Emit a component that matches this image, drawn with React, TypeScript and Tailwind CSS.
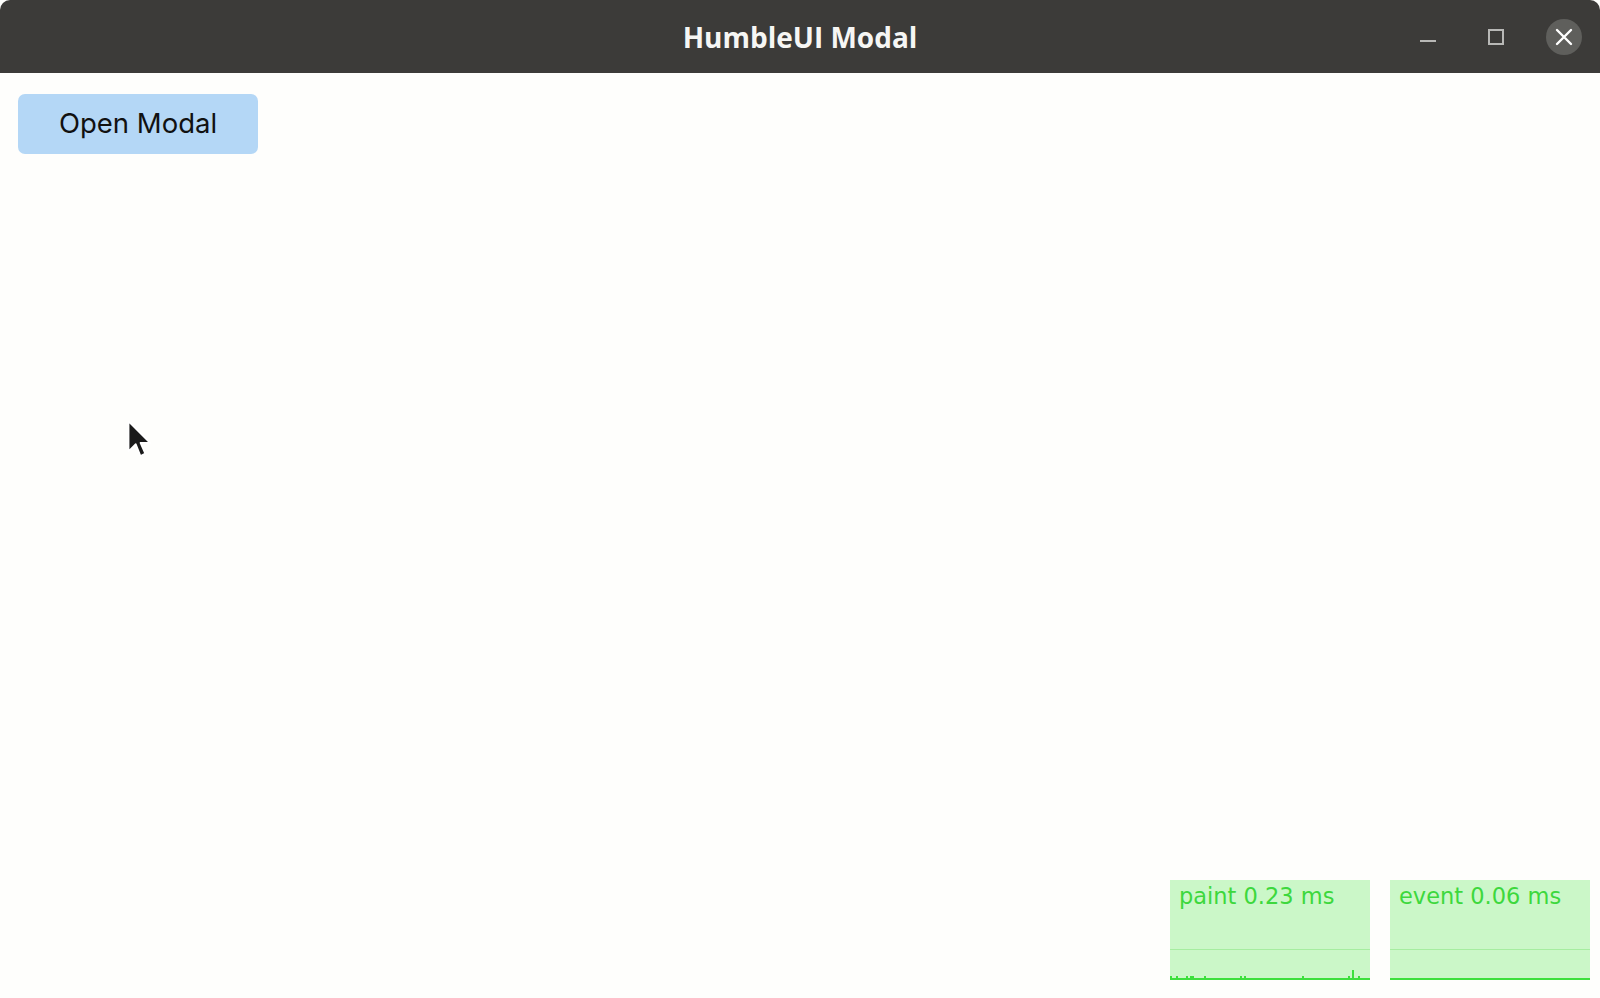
const spikes = [
  { x: 0, h: 2 },
  { x: 6, h: 2 },
  { x: 16, h: 2 },
  { x: 20, h: 2, w: 4 },
  { x: 34, h: 2 },
  { x: 70, h: 2 },
  { x: 74, h: 2 },
  { x: 132, h: 2 },
  { x: 178, h: 2 },
  { x: 182, h: 8 },
  { x: 188, h: 2 },
];

const StatPanel = ({ label, graph }: { label: string; graph?: boolean }) => (
  <div className="flex w-[200px] h-[100px] flex-col bg-[#cbf7c8]">
    <div
      className="h-[69px] pl-[9px] pt-[3px] text-[22.5px] leading-[26px] text-[#3dd83d]"
      style={{ fontFamily: '"DejaVu Sans", sans-serif' }}
    >
      {label}
    </div>
    <div className="h-px bg-[#a6eda0]" />
    <svg width="200" height="30" viewBox="0 0 200 30" className="block">
      {graph &&
        spikes.map((s, i) => (
          <rect key={i} x={s.x} y={28 - s.h} width={s.w ?? 2} height={s.h} fill="#3ddf3d" />
        ))}
      <rect x="0" y="28" width="200" height="2" fill="#3ddf3d" />
    </svg>
  </div>
);

const Cursor = () => (
  <svg width="31" height="43" viewBox="0 0 26 36" className="absolute left-[125px] top-[419px]">
    <path
      d="M3 2 L3 27 L9 21 L13 31 L17 29 L13 20 L21 20 Z"
      fill="#1a1a1a"
      stroke="#ffffff"
      strokeWidth="1.4"
      strokeLinejoin="round"
    />
  </svg>
);

export default function App() {
  return (
    <div className="relative flex h-[998px] w-[1600px] flex-col overflow-hidden bg-[#fefefc]">
      {/* title bar */}
      <div className="grid h-[73px] shrink-0 grid-cols-[1fr_auto_1fr] items-center rounded-t-[10px] bg-[#3c3b39]">
        <div />
        <div
          className="text-[28px] font-bold text-[#f6f6f4]"
          style={{ fontFamily: '"Open Sans", sans-serif' }}
        >
          HumbleUI Modal
        </div>
        <div className="flex items-center justify-end pr-[18px]">
          <div className="mt-[9px] h-[2px] w-[16px] bg-[#b8b8b6]" />
          <div className="ml-[52px] h-[16px] w-[16px] border-2 border-[#b8b8b6]" />
          <div className="ml-[42px] flex h-[36px] w-[36px] items-center justify-center rounded-full bg-[#5f5f5c]">
            <svg width="18" height="18" viewBox="0 0 18 18">
              <path d="M2 2 L16 16 M16 2 L2 16" stroke="#ffffff" strokeWidth="2.4" strokeLinecap="round" />
            </svg>
          </div>
        </div>
      </div>

      {/* content */}
      <div className="flex flex-1 flex-col">
        <div className="pl-[18px] pt-[21px]">
          <button
            className="flex h-[60px] w-[240px] items-center justify-center rounded-[7px] bg-[#b4d7f6] text-[27.5px] text-[#111111]"
            style={{ fontFamily: 'Inter, sans-serif' }}
          >
            Open Modal
          </button>
        </div>
        <div className="flex-1" />
        <div className="flex justify-end gap-[20px] pb-[18px] pr-[10px]">
          <StatPanel label="paint 0.23 ms" graph />
          <StatPanel label="event 0.06 ms" />
        </div>
      </div>

      <Cursor />
    </div>
  );
}
